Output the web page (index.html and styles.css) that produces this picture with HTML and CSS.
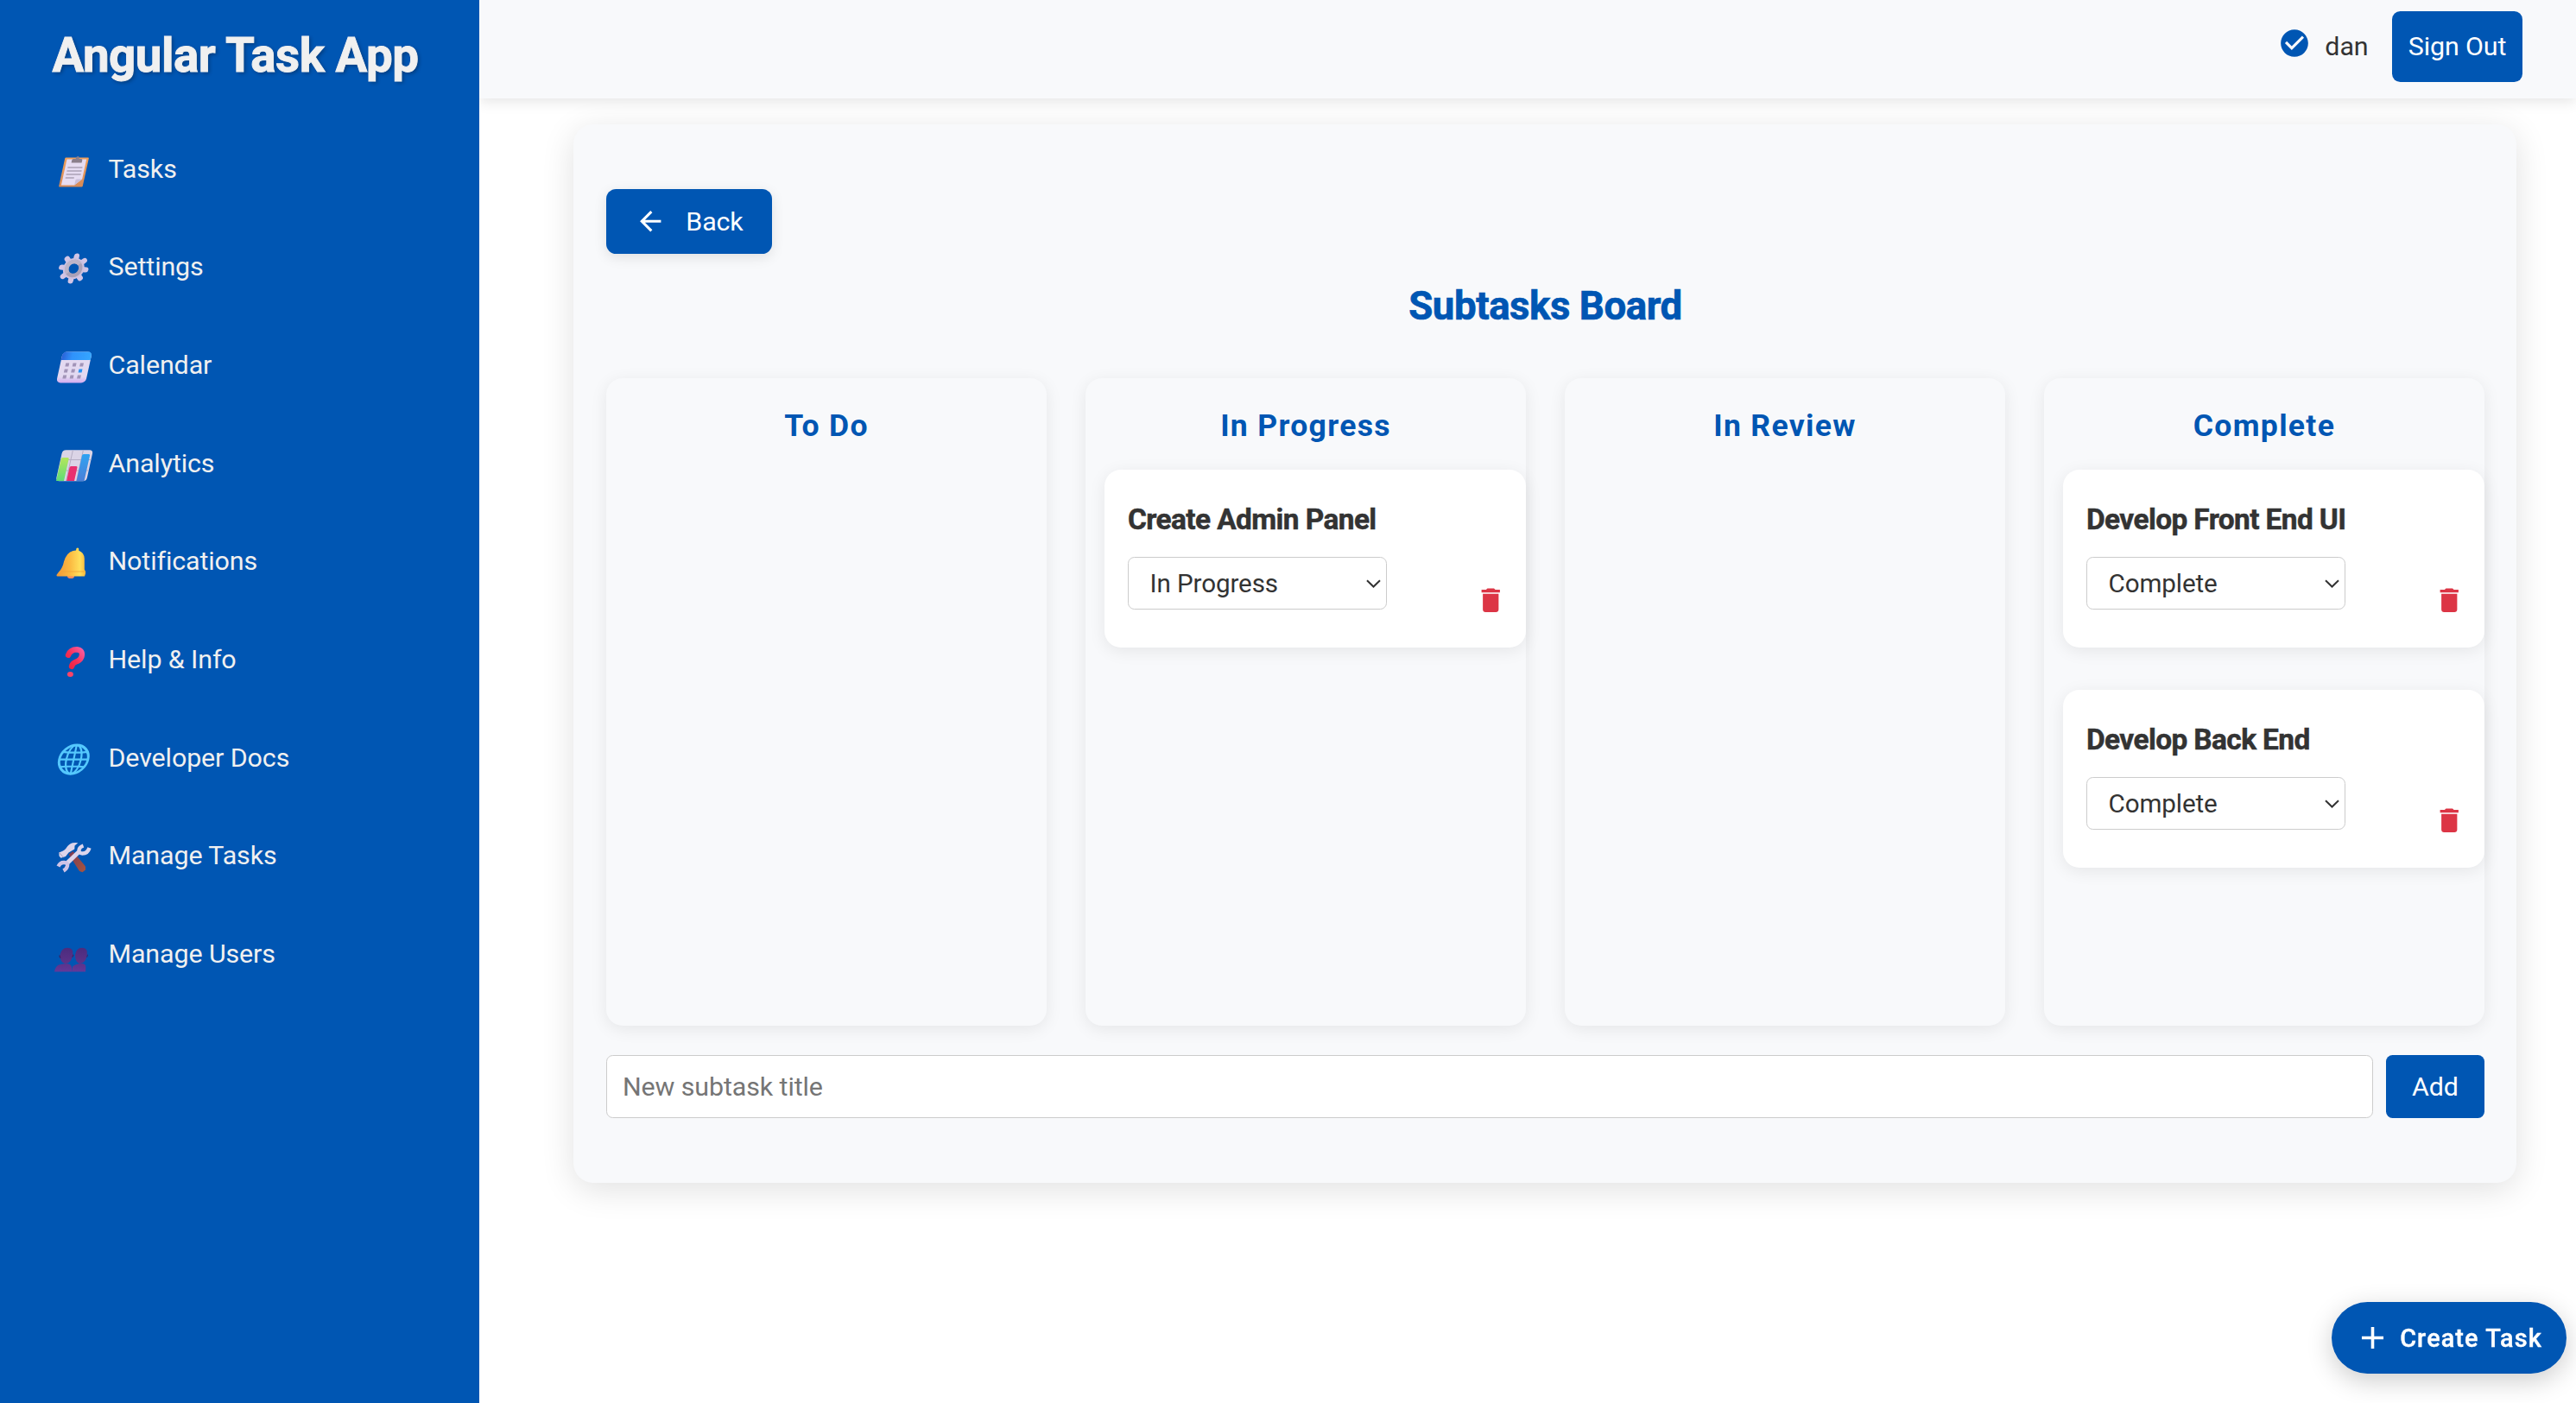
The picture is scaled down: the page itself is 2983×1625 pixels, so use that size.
FILE: index.html
```html
<!DOCTYPE html>
<html lang="en">
<head>
<meta charset="utf-8">
<title>Angular Task App</title>
<link rel="stylesheet" href="styles.css">
</head>
<body>
<div class="app">
  <aside class="sidebar">
    <h1 class="brand">Angular Task App</h1>
    <nav class="nav">
      <a class="nav-item"><svg class="nav-icon" viewBox="0 0 48 40">
        <defs><linearGradient id="board" x2="0" y2="1"><stop offset="0" stop-color="#f0a05c"/><stop offset="1" stop-color="#d58a58"/></linearGradient></defs>
        <g transform="matrix(1 0 -.22 1 8.2 0)">
          <rect x="8" y="3.5" width="27.6" height="34" rx="1" fill="url(#board)"/>
          <path d="M10.500 5.500h22.700v23l-7.500 7h-15.200z" fill="#e6dcf2"/>
          <path d="M33.200 28.500l-7.500 7v-5.500q0-1.500 1.500-1.500z" fill="#c9bfdb"/>
          <path d="M13.500 15h17M13.500 19h17M13.500 23h17M13.500 27h10" stroke="#8d8498" stroke-width="1.100"/>
          <path d="M16.500 9.500v-3q0-1.500 1.500-1.500h2.500q0-3 2-3t2 3h2.500q1.500 0 1.500 1.500v3z" fill="#8b7f8c"/>
        </g></svg><span>Tasks</span></a>
      <a class="nav-item"><svg class="nav-icon" viewBox="0 0 48 40">
        <g transform="translate(25.300 19) skewX(-8) rotate(6)">
          <path d="M0-10V-14.500M0 10V14.500M10 .010H14.300M-10 .010H-14.300M7-7 10.200-10.200M-7 7-10.200 10.200M7 7 10.200 10.200M-7-7-10.200-10.200" stroke="#d2c5e6" stroke-width="6.200" stroke-linecap="round"/>
          <circle r="9.300" fill="none" stroke="#cdc1e0" stroke-width="6"/>
          <circle r="8" fill="none" stroke="#a9a1b8" stroke-width="4.400"/>
          <path d="M-5.700 5.700A8 8 0 0 1 5.700-5.700" fill="none" stroke="#bdb5c9" stroke-width="4.400"/>
        </g></svg><span>Settings</span></a>
      <a class="nav-item"><svg class="nav-icon" viewBox="0 0 48 40">
        <defs>
          <linearGradient id="calTop"><stop offset="0" stop-color="#2a62d8"/><stop offset=".35" stop-color="#2f92fb"/><stop offset="1" stop-color="#35a6ff"/></linearGradient>
          <linearGradient id="calBody" x2="0" y2="1"><stop offset=".8" stop-color="#e3d9f1"/><stop offset="1" stop-color="#d2aaf0"/></linearGradient>
        </defs>
        <g transform="matrix(1 0 -.22 1 8.200 0)">
          <rect x="5" y="1.500" width="34" height="36" rx="5" fill="url(#calBody)"/>
          <path d="M5 11V6.500q0-5 5-5h24q5 0 5 5V11z" fill="url(#calTop)"/>
          <g fill="#a294b8"><path d="M11.300 14.600h4v4h-4zM19.600 14.600h4v4h-4zM28 14.600h4v4h-4zM11.300 21.500h4v4h-4zM19.600 21.500h4v4h-4zM11.300 28.500h4v4h-4zM19.600 28.500h4v4h-4zM28 28.500h4v4h-4z"/></g>
          <path d="M28 21.500h4v4h-4z" fill="#2a93f3"/>
        </g></svg><span>Calendar</span></a>
      <a class="nav-item"><svg class="nav-icon" viewBox="0 0 48 40">
        <defs>
          <linearGradient id="barG" x2="0" y2="1"><stop offset="0" stop-color="#b4e65a"/><stop offset="1" stop-color="#5fdc78"/></linearGradient>
          <linearGradient id="barB" x2="0" y2="1"><stop offset="0" stop-color="#2fa3f2"/><stop offset="1" stop-color="#4a7fd8"/></linearGradient>
        </defs>
        <g transform="matrix(1 0 -.22 1 8.200 0)">
          <rect x="4.500" y="1.200" width="35.500" height="36" rx="4" fill="#dbd4e6"/>
          <path d="M4.500 12.500H40M4.500 25H40M16.500 1.500V37M28.500 1.500V37" stroke="#b5aec4" stroke-width="1"/>
          <path d="M5 37V11.500q0-1.500 1.500-1.500h6q1.500 0 1.500 1.500V37z" fill="url(#barG)"/>
          <path d="M17 37V21.500q0-1.500 1.500-1.500h6q1.500 0 1.500 1.500V37z" fill="#e8306f"/>
          <path d="M28.500 37V7.500q0-1.500 1.500-1.500h6q1.500 0 1.500 1.500V37z" fill="url(#barB)"/>
        </g></svg><span>Analytics</span></a>
      <a class="nav-item"><svg class="nav-icon" viewBox="0 0 48 40">
        <defs><linearGradient id="bell"><stop offset="0" stop-color="#f09838"/><stop offset=".45" stop-color="#fbb840"/><stop offset=".8" stop-color="#ffdf5c"/><stop offset="1" stop-color="#f8b73c"/></linearGradient></defs>
        <ellipse cx="22" cy="34.500" rx="4" ry="2.600" fill="#f08a62"/>
        <path d="M28 4.500 28.500 2q1.300-1.200 2.600 0L31.300 4.800Q37.500 7 37.800 14V26.500Q39.500 28.500 39 31.500L38 34.500H6.500Q5 34.500 5.600 32.800L8 29.500Q12.500 25 14 17.500 17 7 24.500 5z" fill="url(#bell)"/>
        <path d="M9 29H38.200" stroke="#f2a63a" stroke-width="1.200" opacity=".7"/></svg><span>Notifications</span></a>
      <a class="nav-item"><svg class="nav-icon" viewBox="0 0 48 40">
        <defs><linearGradient id="quest" x1="1" y1="0" x2="0" y2="1"><stop offset="0" stop-color="#f85a9c"/><stop offset=".55" stop-color="#f52f57"/><stop offset="1" stop-color="#ee2340"/></linearGradient></defs>
        <path d="M19 11.800Q21.500 5.200 29 5.200 36.500 6 34.500 13.500 33 18 27.500 19.800 24 21 23 25" fill="none" stroke="url(#quest)" stroke-width="6.400" stroke-linecap="round"/>
        <ellipse cx="21.400" cy="34" rx="3.500" ry="3" fill="#fa4468"/></svg><span>Help &amp; Info</span></a>
      <a class="nav-item"><svg class="nav-icon" viewBox="0 0 48 40">
        <g transform="translate(25.300 18.600) skewX(-12)" fill="none" stroke="#55c8fd" stroke-width="2.200">
          <circle r="16.600" stroke-width="2.900"/>
          <ellipse rx="8.500" ry="16.600"/>
          <path d="M0-16.800V16.800M-16.800 0H16.800M-14.300-8.800Q0-7 14.300-8.800M-14.300 8.800Q0 7 14.300 8.800"/>
        </g></svg><span>Developer Docs</span></a>
      <a class="nav-item"><svg class="nav-icon" viewBox="0 0 48 40">
        <defs><linearGradient id="handle" x2="1" y2="1"><stop offset="0" stop-color="#7a3b56"/><stop offset="1" stop-color="#a8553f"/></linearGradient></defs>
        <path d="M19.500 15.500 24.500 12 39 29.500V33.500L35.500 36.200 32 35z" fill="url(#handle)"/>
        <path d="M8.300 13.500 13 11.500Q15 10.500 16.500 8.500 20 3 24 2.300 27 1.600 30.300 2.200L26.500 5.500 26.300 9.500 19.500 13.500 16 18 10.500 19.700 8.500 17.500z" fill="#dcd4ea"/>
        <path d="M8.500 13.500 13.500 19.200" stroke="#a79fb9" stroke-width="1"/>
        <path d="M31.200 12.700 17.800 25.600" stroke="#ddd5ec" stroke-width="5"/>
        <path d="M36.500 5.500Q32 7 31.500 10.500T35.500 14.500Q41.500 14.500 43.500 8" fill="none" stroke="#ddd5ec" stroke-width="4.400"/>
        <path d="M7.500 29.500Q10 24.500 14.500 25T18 29 13.500 34.500" fill="none" stroke="#cfc3e6" stroke-width="4.400"/></svg><span>Manage Tasks</span></a>
      <a class="nav-item"><svg class="nav-icon" viewBox="0 0 48 40">
        <defs><linearGradient id="user" x2="0" y2="1"><stop offset="0" stop-color="#4b2c7e"/><stop offset=".6" stop-color="#5b3288"/><stop offset="1" stop-color="#62399a"/></linearGradient></defs>
        <g fill="url(#user)">
          <path d="M23 37.500 24 31.500Q28 28 34 28T39.300 33L39 37.500zM27 18Q28 10 35 9.800 42 10 40.800 17.500 39.500 28 32.500 28 27 27 27 18z"/>
          <path d="M3 37.500Q4 31.500 8 29.500 12 28 17 28 23 28.500 23 33V37.500zM9.500 18Q11 10 18 9.800 25.500 10 24.300 17.500 23 28 15.500 28 9.500 27 9.500 18z"/>
        </g>
        <path d="M9.500 18.500q-1.500-1-1 1.500t2 1.500M24.300 17.500q1.500-.5 1 1.500t-2 2M41 17.500q1.300-.5.800 1.500t-1.600 2" fill="#3b2368"/></svg><span>Manage Users</span></a>
    </nav>
  </aside>

  <div class="content">
    <header class="topbar">
      <svg class="check" viewBox="0 0 24 24"><path fill="#0056b3" d="M12 2C6.480 2 2 6.480 2 12s4.480 10 10 10 10-4.480 10-10S17.520 2 12 2zm-2 15l-5-5 1.410-1.410L10 14.170l7.590-7.590L19 8l-9 9z"/></svg>
      <span class="user">dan</span>
      <button class="btn signout">Sign Out</button>
    </header>

    <main class="panel">
      <button class="btn back"><svg viewBox="0 0 24 24"><path fill="#fff" d="M20 11H7.830l5.590-5.590L12 4l-8 8 8 8 1.410-1.410L7.830 13H20v-2z"/></svg><span>Back</span></button>
      <h2 class="title">Subtasks Board</h2>
      <div class="board">
        <section class="column"><h3>To Do</h3></section>
        <section class="column"><h3>In Progress</h3>
          <article class="card"><h4>Create Admin Panel</h4>
            <div class="card-row">
              <div class="select"><span>In Progress</span><svg viewBox="0 0 17 10"><path d="M1 1.200 8.500 8.500 16 1.200"/></svg></div>
              <svg class="trash" viewBox="0 0 24 24"><path fill="#dc3545" d="M6 19c0 1.100.9 2 2 2h8c1.100 0 2-.9 2-2V7H6v12zM19 4h-3.500l-1-1h-5l-1 1H5v2h14V4z"/></svg>
            </div></article>
        </section>
        <section class="column"><h3>In Review</h3></section>
        <section class="column"><h3>Complete</h3>
          <article class="card"><h4>Develop Front End UI</h4>
            <div class="card-row">
              <div class="select"><span>Complete</span><svg viewBox="0 0 17 10"><path d="M1 1.200 8.500 8.500 16 1.200"/></svg></div>
              <svg class="trash" viewBox="0 0 24 24"><path fill="#dc3545" d="M6 19c0 1.100.9 2 2 2h8c1.100 0 2-.9 2-2V7H6v12zM19 4h-3.500l-1-1h-5l-1 1H5v2h14V4z"/></svg>
            </div></article>
          <article class="card"><h4>Develop Back End</h4>
            <div class="card-row">
              <div class="select"><span>Complete</span><svg viewBox="0 0 17 10"><path d="M1 1.200 8.500 8.500 16 1.200"/></svg></div>
              <svg class="trash" viewBox="0 0 24 24"><path fill="#dc3545" d="M6 19c0 1.100.9 2 2 2h8c1.100 0 2-.9 2-2V7H6v12zM19 4h-3.500l-1-1h-5l-1 1H5v2h14V4z"/></svg>
            </div></article>
        </section>
      </div>
      <div class="add-row">
        <input class="field" type="text" placeholder="New subtask title">
        <button class="btn add">Add</button>
      </div>
    </main>
  </div>
</div>
<button class="btn create"><svg viewBox="0 0 24 24"><path fill="#fff" d="M19 13h-6v6h-2v-6H5v-2h6V5h2v6h6v2z"/></svg><span>Create Task</span></button>
</body>
</html>
```
FILE: styles.css
```css
* { box-sizing: border-box; }

body {
  margin: 0;
  font: 400 30.4px/36px Roboto, sans-serif;
  letter-spacing: -0.1px;
  color: #333;
  background: #fff;
}

h1, h2, h3, h4 { margin: 0; font-weight: 700; }

.app {
  display: grid;
  grid-template-columns: 555px 1fr;
  height: 1625px;
  overflow: hidden;
}

/* Sidebar */
.sidebar {
  background: #0056b3;
  color: #f0f0f0;
  z-index: 1;
}

.brand {
  height: 139px;
  padding: 32px 0 0 60.5px;
  font-size: 54.72px;
  line-height: 64px;
  letter-spacing: -0.5px;
  white-space: nowrap;
  -webkit-text-stroke: 0.9px currentColor;
  text-shadow: 2px 2px 4px rgba(0, 0, 0, .3);
}

.nav { display: flex; flex-direction: column; }

.nav-item {
  display: flex;
  align-items: center;
  height: 113.67px;
  padding-left: 60px;
}

.nav-icon {
  width: 48px;
  height: 40px;
  margin: 6px 17.5px 0 0;
}

/* Header */
.content { display: flex; flex-direction: column; min-width: 0; }

.topbar {
  display: flex;
  justify-content: flex-end;
  align-items: flex-start;
  height: 114px;
  padding: 13px 62px 0 0;
  background: #f8f9fb;
  box-shadow: 0 4px 15px rgba(0, 0, 0, .1);
}

.check { width: 38px; height: 38px; margin: 18px 16px 0 0; }
.user { margin: 23px 27.5px 0 0; }

.btn {
  display: flex;
  align-items: center;
  justify-content: center;
  padding: 0;
  border: 0;
  border-radius: 7.6px;
  background: #0056b3;
  color: #fff;
  font: inherit;
  letter-spacing: inherit;
  white-space: nowrap;
}

.signout { width: 151px; height: 82px; border-radius: 9.5px; }

/* Panel */
.panel {
  display: flex;
  flex-direction: column;
  align-items: flex-start;
  margin: 30px 69px 0 109px;
  height: 1226px;
  padding: 75px 37px 0 38px;
  border-radius: 23px;
  background: #f8f9fb;
  box-shadow: 0 8px 38px rgba(0, 0, 0, .12);
}

.back {
  width: 192px;
  height: 75px;
  border-radius: 11.4px;
  box-shadow: 0 4px 15px rgba(0, 0, 0, .1);
}
.back svg { width: 36.5px; height: 36.5px; margin: 0 22.5px 0 0; }

.title {
  align-self: stretch;
  margin: 35px 0 57px;
  color: #0056b3;
  font-size: 45.6px;
  line-height: 52px;
  letter-spacing: -0.45px;
  text-align: center;
  -webkit-text-stroke: 0.7px currentColor;
}

.board {
  align-self: stretch;
  display: grid;
  grid-template-columns: repeat(4, 1fr);
  gap: 45px;
  height: 750px;
}

.column {
  min-width: 0;
  padding: 34px 0 0 22px;
  border-radius: 19px;
  background: #f8f9fb;
  box-shadow: 0 4px 19px rgba(0, 0, 0, .08);
}
.column h3 {
  margin: 0 22px 30px 0;
  color: #0056b3;
  font-size: 35.57px;
  line-height: 42px;
  letter-spacing: 1.3px;
  text-align: center;
}

.card {
  height: 206px;
  margin-bottom: 49px;
  padding: 36px 28px 0 27px;
  border-radius: 19px;
  background: #fff;
  box-shadow: 0 4px 19px rgba(0, 0, 0, .08);
}
.card h4 {
  font-size: 33.44px;
  line-height: 44px;
  letter-spacing: -0.6px;
  white-space: nowrap;
  -webkit-text-stroke: 0.5px currentColor;
}

.card-row {
  display: flex;
  justify-content: space-between;
  margin-top: 21px;
}

.select {
  display: flex;
  align-items: center;
  justify-content: space-between;
  width: 300px;
  height: 61px;
  padding: 0 6.5px 0 24.5px;
  border: 1px solid #ccc;
  border-radius: 7.6px;
  font-size: 29.6px;
}
.select svg { width: 17px; height: 10px; }
.select path { fill: none; stroke: #333; stroke-width: 2; }

.trash { width: 36.5px; height: 36.5px; margin: 31.5px -5px 0 0; }

.add-row {
  align-self: stretch;
  display: flex;
  gap: 15px;
  margin-top: 34px;
}
.field {
  flex: 1;
  height: 73px;
  padding: 0 18px;
  border: 1px solid #ccc;
  border-radius: 7.6px;
  background: #fff;
  font: inherit;
  letter-spacing: inherit;
}
.field::placeholder { color: #757575; }
.add { width: 114px; height: 73px; }

/* Floating action */
.create {
  position: fixed;
  right: 11px;
  bottom: 34px;
  width: 272px;
  height: 83px;
  padding-right: 2px;
  border-radius: 42px;
  font-size: 28.88px;
  font-weight: 500;
  letter-spacing: 1.1px;
  -webkit-text-stroke: 0.4px currentColor;
  box-shadow: 0 8px 30px rgba(0, 0, 0, .2);
}
.create svg { width: 43px; height: 43px; margin-right: 10px; }
```
